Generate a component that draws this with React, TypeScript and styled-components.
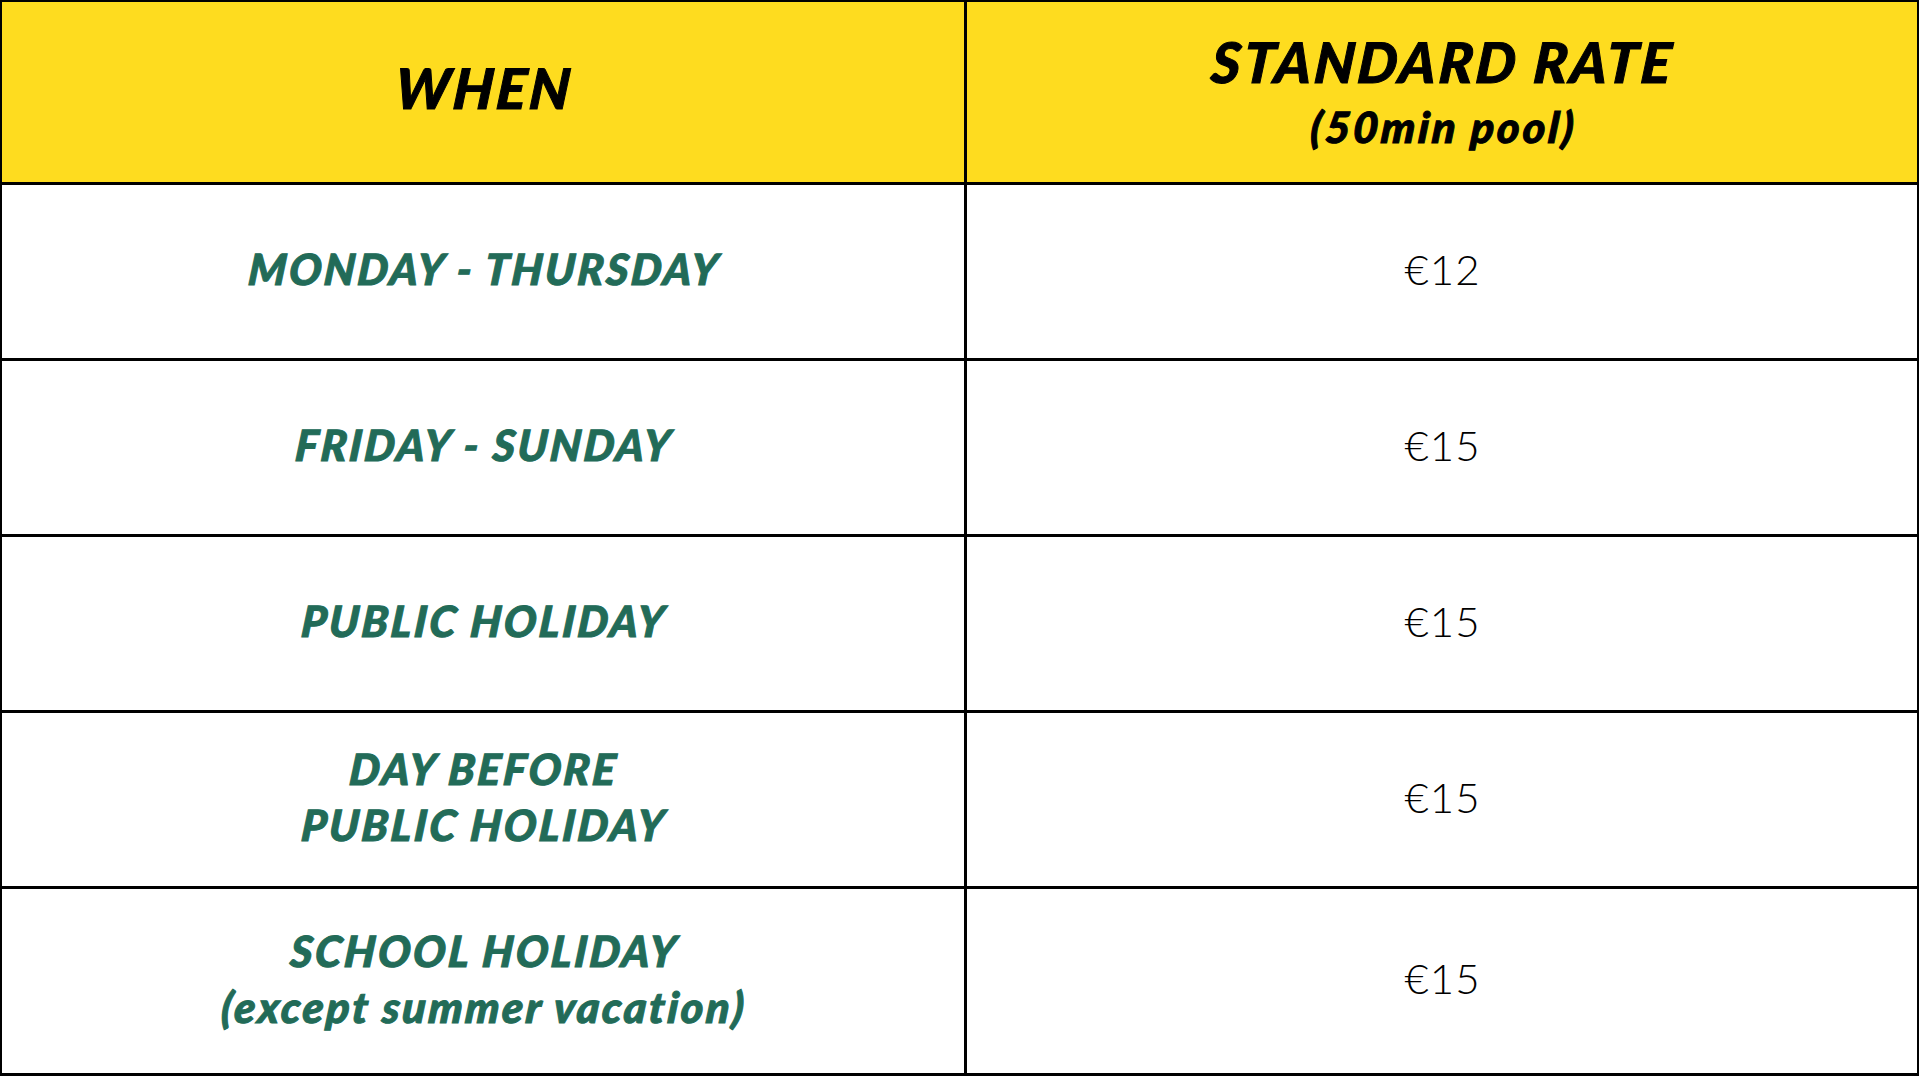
import React from "react";
import styled, { createGlobalStyle } from "styled-components";

const Global = createGlobalStyle`
  html, body {
    margin: 0;
    padding: 0;
    background: #ffffff;
  }
  body {
    font-family: "Lato", "Liberation Sans", sans-serif;
  }
`;

const Table = styled.div`
  box-sizing: border-box;
  width: 1919px;
  height: 1076px;
  background: #000000;
  padding: 2px 2px 3px 2px;
  display: grid;
  grid-template-columns: 962px 1fr;
  grid-template-rows: 180px repeat(4, 173px) 1fr;
  gap: 3px;
`;

const Cell = styled.div<{ $head?: boolean; $shift?: number }>`
  box-sizing: border-box;
  background: ${(p) => (p.$head ? "#FEDC1F" : "#ffffff")};
  display: flex;
  flex-direction: column;
  align-items: center;
  justify-content: center;
  text-align: center;
  padding-top: ${(p) => Math.max(0, p.$shift ?? 0)}px;
  padding-bottom: ${(p) => Math.max(0, -(p.$shift ?? 0))}px;
`;

const Heavy = styled.div<{ $ls: number }>`
  font-family: "Lato", sans-serif;
  font-weight: 900;
  font-style: italic;
  transform: skewX(-5deg);
  white-space: nowrap;
  letter-spacing: ${(p) => p.$ls}px;
  padding-left: ${(p) => p.$ls}px;
  -webkit-text-stroke: 1px currentColor;
`;

const HeadTitle = styled(Heavy)`
  font-size: 56px;
  line-height: 65px;
  color: #000;
`;

const HeadSub = styled(Heavy)`
  font-size: 43px;
  line-height: 65px;
  color: #000;
`;

const Label = styled(Heavy)`
  font-size: 43px;
  line-height: 56px;
  color: #226B58;
`;

const Price = styled.div`
  font-family: "Lato", sans-serif;
  font-weight: 300;
  font-size: 42px;
  color: #000;
  letter-spacing: 1px;
  padding-left: 1px;
`;

const rows: { label: string[]; price: string }[] = [
  { label: ["MONDAY - THURSDAY"], price: "€12" },
  { label: ["FRIDAY - SUNDAY"], price: "€15" },
  { label: ["PUBLIC HOLIDAY"], price: "€15" },
  { label: ["DAY BEFORE", "PUBLIC HOLIDAY"], price: "€15" },
  { label: ["SCHOOL HOLIDAY", "(except summer vacation)"], price: "€15" },
];

export default function App() {
  return (
    <>
      <Global />
      <Table>
        <Cell $head $shift={-10}>
          <HeadTitle $ls={3}>WHEN</HeadTitle>
        </Cell>
        <Cell $head $shift={4}>
          <HeadTitle $ls={3}>STANDARD RATE</HeadTitle>
          <HeadSub $ls={3}>(50min pool)</HeadSub>
        </Cell>
        {rows.map((r, i) => (
          <React.Fragment key={i}>
            <Cell $shift={-5}>
              {r.label.map((l, j) => (
                <Label key={j} $ls={2.6}>
                  {l}
                </Label>
              ))}
            </Cell>
            <Cell $shift={-6}>
              <Price>{r.price}</Price>
            </Cell>
          </React.Fragment>
        ))}
      </Table>
    </>
  );
}
